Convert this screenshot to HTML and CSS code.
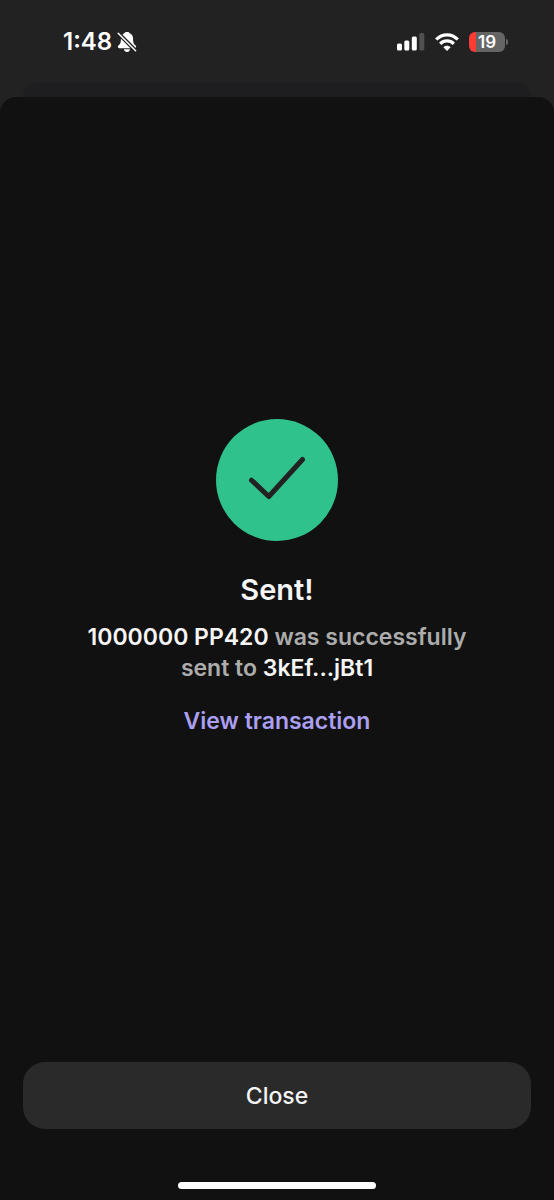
FILE: index.html
```html
<!DOCTYPE html>
<html lang="en">
<head>
<meta charset="utf-8">
<meta name="viewport" content="width=device-width, initial-scale=1">
<title>Sent</title>
<link rel="stylesheet" href="styles.css">
</head>
<body>
<div class="screen">
  <header class="status-bar">
    <div class="status-left">
      <span class="time">1:48</span>
      <svg class="bell" width="20" height="22" viewBox="0 0 20 22" aria-label="Silent mode">
        <path fill="#fff" d="M10 1C8.600 1 7.700 1.500 7.300 2.300C4.800 3.300 3.900 5.500 3.900 8C3.900 12 3.200 13 1.400 14.600C.4 15.700 .8 17.200 2.300 17.200H17.700C19.200 17.200 19.600 15.700 18.600 14.600C16.800 13 16.100 12 16.100 8C16.100 5.500 15.200 3.300 12.700 2.300C12.300 1.500 11.400 1 10 1Z"/>
        <path fill="#fff" d="M7 18.300H13C12.800 20 11.600 21 10 21S7.200 20 7 18.300Z"/>
        <path d="M.5 1.500L19.500 20.500" stroke="#222" stroke-width="4"/>
        <path d="M1.200 2.200L18.600 19.800" stroke="#fff" stroke-width="1.500" stroke-linecap="round"/>
      </svg>
    </div>
    <div class="status-right">
      <svg width="28" height="18" viewBox="0 0 28 18" aria-label="Signal">
        <g fill="#fff"><rect x="0" y="10.500" width="5" height="7" rx="1.500"/><rect x="7.300" y="7.500" width="5" height="10" rx="1.500"/><rect x="14.800" y="3.500" width="5" height="14" rx="1.500"/></g>
        <rect x="22.300" y="0" width="5" height="17.500" rx="1.500" fill="#505050"/>
      </svg>
      <svg width="24" height="18" viewBox="0 0 24 18" aria-label="Wi-Fi">
        <g fill="none" stroke="#fff" stroke-width="3.200"><path d="M1.200 6.500C7.200 .2 16.800 .2 22.800 6.500"/><path d="M5.200 10.800C9 7 15 7 18.800 10.800"/></g>
        <path fill="#fff" d="M8.400 14.200C10.400 12.200 13.600 12.200 15.600 14.200L12 18Z"/>
      </svg>
      <div class="battery"><span class="battery-body">19</span><span class="battery-tip"></span></div>
    </div>
  </header>
  <div class="sheet-behind"></div>
  <main class="sheet">
    <section class="result">
      <svg class="check" width="122" height="122" viewBox="0 0 122 122" aria-hidden="true">
        <circle cx="61" cy="61" r="61" fill="#2fc28c"/>
        <path d="M35.500 61.200L52.800 77.500L86.500 40.500" fill="none" stroke="#222" stroke-width="5" stroke-linecap="round" stroke-linejoin="round"/>
      </svg>
      <h1 class="title">Sent!</h1>
      <p class="message"><strong>1000000 PP420</strong> was successfully<br>sent to <strong>3kEf...jBt1</strong></p>
      <a class="link" href="#">View transaction</a>
    </section>
    <button class="close" type="button">Close</button>
    <div class="home-indicator"></div>
  </main>
</div>
</body>
</html>
```
FILE: styles.css
```css
* { box-sizing: border-box; }
body {
  margin: 0;
  background: #222;
  font-family: Inter, "Liberation Sans", sans-serif;
  font-weight: 500;
  color: #f5f5f5;
}
.screen {
  display: flex;
  flex-direction: column;
  min-height: 100vh;
}
.status-bar {
  display: flex;
  justify-content: space-between;
  align-items: center;
  height: 83px;
  padding: 0 46px 0 63px;
  color: #fff;
}
.status-left, .status-right { display: flex; align-items: center; }
.status-left { gap: 5px; }
.status-right { gap: 10px; }
.time { font-size: 24px; line-height: 28px; font-weight: 600; }
.battery { display: flex; align-items: center; gap: 1px; }
.battery-body {
  width: 36px;
  height: 20px;
  border-radius: 6px;
  background: linear-gradient(90deg, #fb3b36 7px, #656565 7px);
  font-size: 17px;
  line-height: 20px;
  font-weight: 600;
  text-align: center;
}
.battery-tip {
  width: 2px;
  height: 6px;
  border-radius: 0 2px 2px 0;
  background: #656565;
}
.sheet-behind {
  height: 14px;
  margin: 0 23px;
  border-radius: 14px 14px 0 0;
  background: #1e1e20;
}
.sheet {
  flex: 1;
  display: flex;
  flex-direction: column;
  padding: 0 23px 11px;
  border-radius: 16px 16px 0 0;
  background: #111;
}
.result {
  flex: 1;
  display: flex;
  flex-direction: column;
  align-items: center;
  justify-content: center;
  padding-bottom: 4px;
  text-align: center;
}
.title {
  margin: 31px 0 14px;
  font-size: 29px;
  line-height: 36px;
  font-weight: 600;
}
.message {
  margin: 0;
  font-size: 23px;
  line-height: 31px;
  font-weight: 600;
  color: #acacac;
}
.message strong { font-weight: 600; color: #f5f5f5; }
.link {
  margin-top: 22px;
  font-size: 23px;
  line-height: 31px;
  font-weight: 600;
  color: #ab9ff2;
  text-decoration: none;
}
.close {
  height: 67px;
  border: 0;
  border-radius: 22px;
  background: #2a2a2a;
  color: #f5f5f5;
  font: inherit;
  font-size: 23px;
  cursor: pointer;
}
.home-indicator {
  align-self: center;
  width: 198px;
  height: 7px;
  margin-top: 53px;
  border-radius: 4px;
  background: #fff;
}
```
